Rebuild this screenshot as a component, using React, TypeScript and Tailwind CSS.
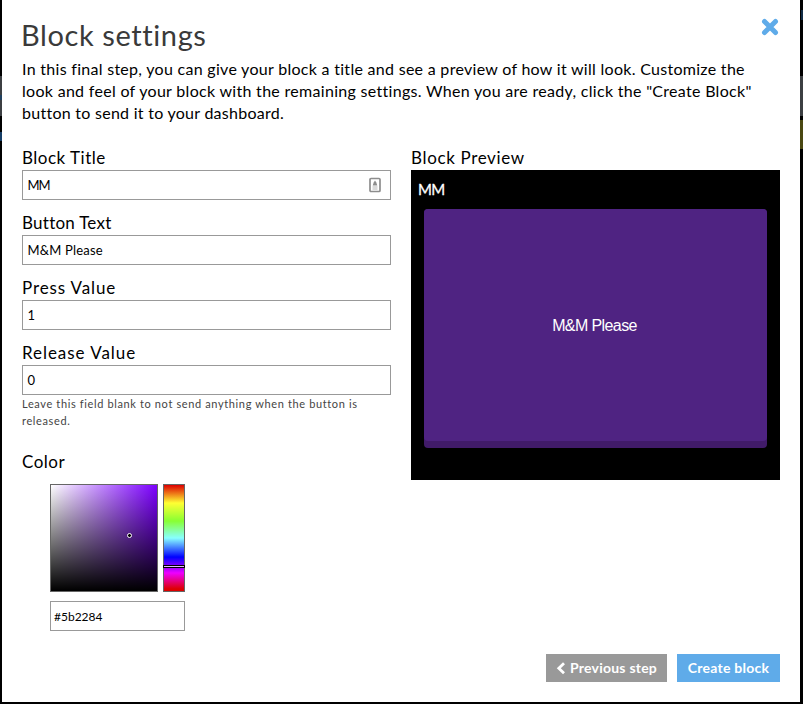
import React from "react";

const lato = "font-['Lato','Open_Sans',sans-serif]";

function Field({ label, value, labelSpacing, valueSpacing = "", icon }: { label: string; value: string; labelSpacing: string; valueSpacing?: string; icon?: boolean }) {
  return (
    <div className="h-[65px]">
      <label className={`block h-[22px] whitespace-nowrap text-[17px] leading-[20px] ${labelSpacing}`}>{label}</label>
      <div className="flex h-[30px] w-[369px] items-center justify-between border border-[#999] bg-white pl-[4.5px] pr-[9px] text-[13px]">
        <span className={`pt-[2px] ${valueSpacing}`}>{value}</span>
        {icon && (
          <svg width="12" height="16" viewBox="0 0 12 16" fill="none">
            <rect x="1" y="1.5" width="10" height="13" rx="1" stroke="#8d8d8d" strokeWidth="1.7" />
            <path d="M6 3.5L7.3 5.5L8.3 8.5H3.7L4.7 5.5Z" fill="#8d8d8d" />
            <path d="M3.5 10H8.5M3.5 12H8.5" stroke="#b5b5b5" />
          </svg>
        )}
      </div>
    </div>
  );
}

function ColorPicker() {
  return (
    <div className="ml-[28px] mt-[11px] w-[135px]">
      <div className="flex justify-between">
        <div className="relative h-[108px] w-[108px] border border-[#666] bg-[linear-gradient(to_top,#000,transparent),linear-gradient(to_right,#fff,#7c00ff)]">
          <span className="absolute left-[76px] top-[48px] h-[5px] w-[5px] rounded-full border border-white bg-black" />
        </div>
        <div className="relative h-[108px] w-[22px] border border-[#666] bg-[linear-gradient(to_bottom,#d00_0%,#ff3_17%,#8f3_34%,#8ff_50%,#00f_68%,#e0f_83%,#d00_98%,#d00_100%)]">
          <span className="absolute -left-px top-[80px] h-[3px] w-[22px] border border-black bg-[#e5b5ff]" />
        </div>
      </div>
      <div className="mt-[9px] flex h-[30px] items-center border border-[#999] pl-[3px] pt-[2px] text-[12px]">#5b2284</div>
    </div>
  );
}

export default function App() {
  return (
    <div className={`relative h-[704px] w-[803px] overflow-hidden bg-black pl-[2px] text-black ${lato}`}>
      <div className="absolute left-0 top-[76px] h-[40px] w-[803px] bg-[#3c3f42]" />
      <div className="absolute left-0 top-[95px] h-[5px] w-[2px] bg-[#20405f]" />
      <div className="absolute left-0 top-[132px] h-[9px] w-[2px] bg-[#163d66]" />
      <div className="absolute right-0 top-[120px] h-[29px] w-[3px] bg-[#4a4812]" />
      <div className="absolute right-0 top-[10px] h-[10px] w-[2px] bg-[#102c45]" />
      <main className="relative flex h-[702px] w-[798px] flex-col bg-white pl-[20px] pr-[20px] pt-[16px]">
        <header className="flex h-[43px] justify-between">
          <h1 className="-ml-[1px] text-[29px] leading-[38px] tracking-[0.6px] text-[#3a3a3a]">Block settings</h1>
          <button className="mr-[1px] mt-[2px] h-[18px] w-[18px]" aria-label="Close">
            <svg width="18" height="18" viewBox="0 0 18 18">
              <path d="M3.5 3.5L14.5 14.5M14.5 3.5L3.5 14.5" stroke="#5fabe9" strokeWidth="5" strokeLinecap="round" />
            </svg>
          </button>
        </header>
        <p className="-mt-[1px] h-[67px] whitespace-nowrap text-[16px] leading-[22px]">
          <span className="block tracking-[0.29px]">In this final step, you can give your block a title and see a preview of how it will look. Customize the</span>
          <span className="block tracking-[0.3px]">look and feel of your block with the remaining settings. When you are ready, click the "Create Block"</span>
          <span className="block tracking-[0.27px]">button to send it to your dashboard.</span>
        </p>
        <div className="mt-[23px] flex gap-[20px]">
          <section className="w-[369px]">
            <Field label="Block Title" value="MM" labelSpacing="tracking-[0.5px]" valueSpacing="tracking-[-1px]" icon />
            <Field label="Button Text" value="M&M Please" labelSpacing="tracking-[0.25px]" valueSpacing="tracking-[0.2px]" />
            <Field label="Press Value" value="1" labelSpacing="tracking-[0.87px]" />
            <Field label="Release Value" value="0" labelSpacing="tracking-[0.95px]" />
            <div className="-mt-[13px] h-[35px] whitespace-nowrap text-[11px] leading-[17px] tracking-[0.63px] text-[#444]">
              <div>Leave this field blank to not send anything when the button is</div>
              <div>released.</div>
            </div>
            <div className="mt-[21px] h-[22px] text-[17px] leading-[22px] tracking-[0.5px]">Color</div>
            <ColorPicker />
          </section>
          <section className="w-[369px]">
            <h2 className="h-[22px] text-[17px] leading-[20px] tracking-[0.65px]">Block Preview</h2>
            <div className="h-[310px] bg-black pl-[13px] pr-[13px]">
              <div className="-ml-[6px] h-[39px] text-[15px] leading-[39px] tracking-[-0.7px] text-white [-webkit-text-stroke:0.3px_white]">MM</div>
              <div className="h-[239px] rounded-[4px] bg-[#411b69]">
                <div className="flex h-[232px] items-center justify-center rounded-[4px] bg-[#4f2382] pr-[2px] pt-[2px] font-['Liberation_Sans',sans-serif] text-[16px] tracking-[-0.6px] text-white">
                  M&amp;M Please
                </div>
              </div>
            </div>
          </section>
        </div>
        <footer className="absolute bottom-[20px] right-[20px] flex gap-[10px] text-[14px] font-bold text-white">
          <button className="flex h-[28px] w-[121px] items-center gap-[3px] whitespace-nowrap bg-[#999] pl-[10px]">
            <svg className="shrink-0" width="10" height="13" viewBox="0 0 10 13">
              <path d="M8 1.2L2.8 6.2L8 11.2" fill="none" stroke="#fff" strokeWidth="2.8" />
            </svg>
            <span className="pb-[1px] pl-[1px] tracking-[0.23px]">Previous step</span>
          </button>
          <button className="h-[28px] w-[103px] whitespace-nowrap bg-[#5fabe9] pb-[1px] tracking-[0.25px]">Create block</button>
        </footer>
      </main>
    </div>
  );
}
